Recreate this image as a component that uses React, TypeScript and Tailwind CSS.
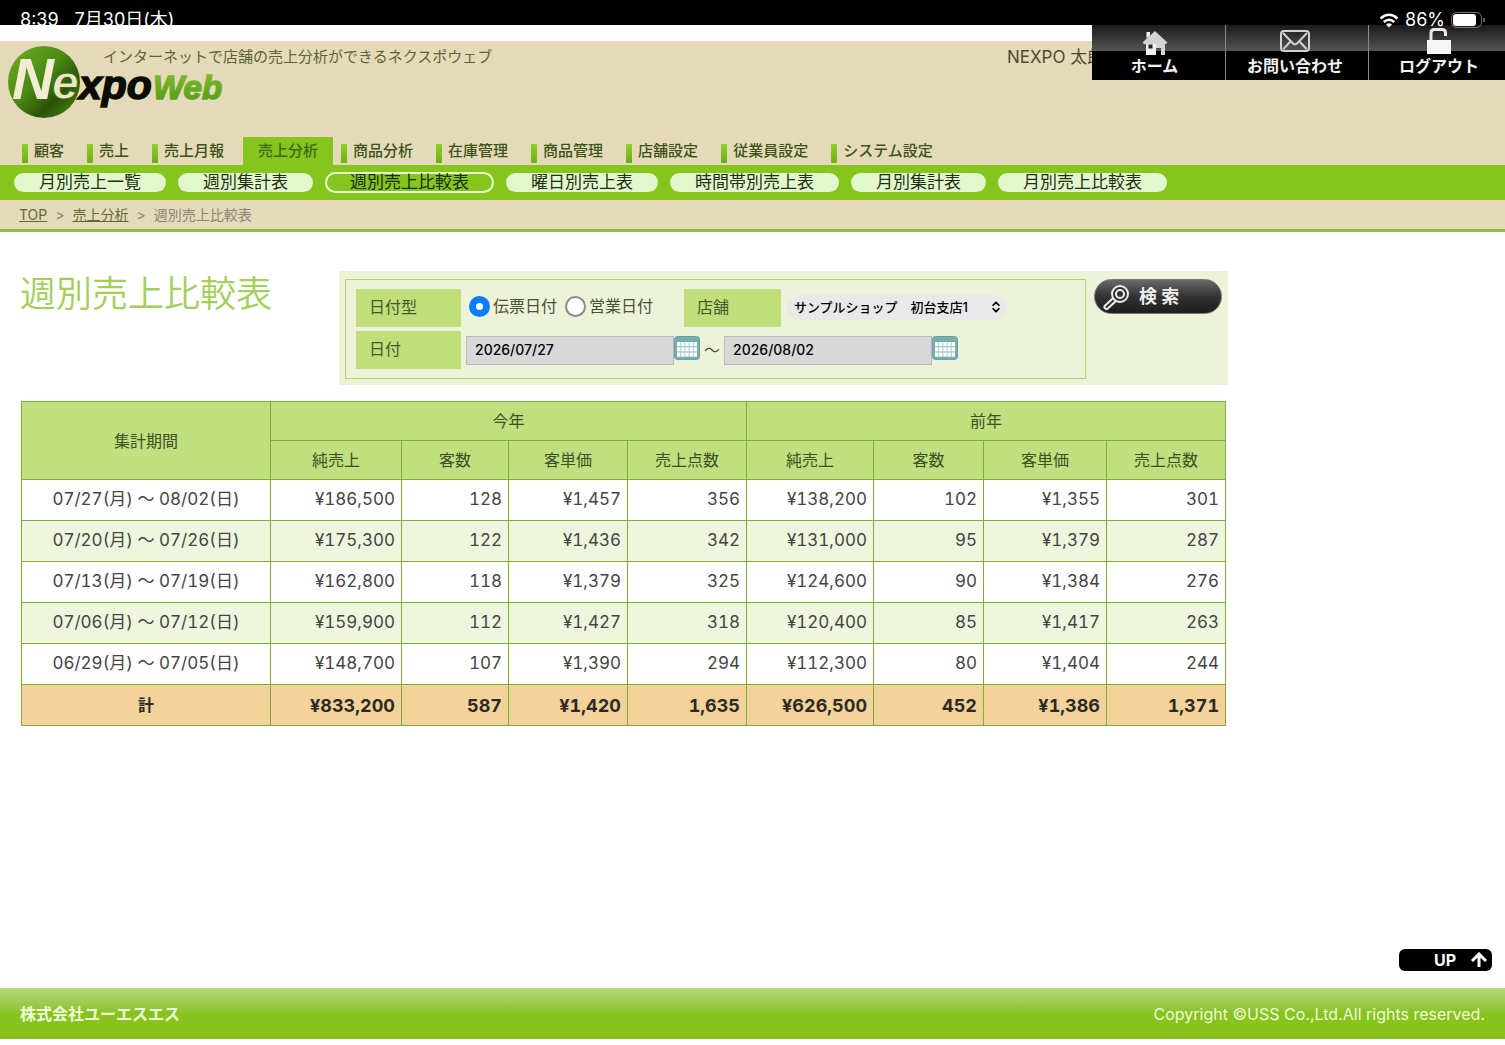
import React, { useState } from "react";
import { LuChevronsUpDown } from "react-icons/lu";

const mainTabs = [
  "顧客",
  "売上",
  "売上月報",
  "売上分析",
  "商品分析",
  "在庫管理",
  "商品管理",
  "店舗設定",
  "従業員設定",
  "システム設定",
];

const subTabs = [
  "月別売上一覧",
  "週別集計表",
  "週別売上比較表",
  "曜日別売上表",
  "時間帯別売上表",
  "月別集計表",
  "月別売上比較表",
];

const columnTitles = ["純売上", "客数", "客単価", "売上点数"];

const rows = [
  ["07/27(月) 〜 08/02(日)", "¥186,500", "128", "¥1,457", "356", "¥138,200", "102", "¥1,355", "301"],
  ["07/20(月) 〜 07/26(日)", "¥175,300", "122", "¥1,436", "342", "¥131,000", "95", "¥1,379", "287"],
  ["07/13(月) 〜 07/19(日)", "¥162,800", "118", "¥1,379", "325", "¥124,600", "90", "¥1,384", "276"],
  ["07/06(月) 〜 07/12(日)", "¥159,900", "112", "¥1,427", "318", "¥120,400", "85", "¥1,417", "263"],
  ["06/29(月) 〜 07/05(日)", "¥148,700", "107", "¥1,390", "294", "¥112,300", "80", "¥1,404", "244"],
];

const totals = ["¥833,200", "587", "¥1,420", "1,635", "¥626,500", "452", "¥1,386", "1,371"];

const Logo = () => (
  <svg width="220" height="76" viewBox="0 0 220 76" role="img" aria-label="NexpoWeb">
    <defs>
      <linearGradient id="ball" x1="0" y1="0" x2="1" y2="1">
        <stop offset="0" stopColor="#6fae22" />
        <stop offset="0.45" stopColor="#4a8a14" />
        <stop offset="0.7" stopColor="#2a5207" />
        <stop offset="1" stopColor="#4f8f18" />
      </linearGradient>
      <linearGradient id="web" x1="0" y1="0" x2="0" y2="1">
        <stop offset="0" stopColor="#86bd30" />
        <stop offset="1" stopColor="#4f9a15" />
      </linearGradient>
    </defs>
    <circle cx="36" cy="37" r="36" fill="url(#ball)" />
    <g fontFamily="'Liberation Sans', Arial, sans-serif" fontWeight="700" fontStyle="italic">
      <text x="71" y="54" fontSize="41" fill="#0b0d05" stroke="#0b0d05" strokeWidth="1.500">xpo</text>
      <text x="4" y="54" fontSize="58" fill="#f1ecd2">N</text>
      <text x="44" y="54" fontSize="48" fill="#ece6c4" stroke="#3c6b12" strokeWidth="1">e</text>
      <text x="145" y="54" fontSize="33" fill="url(#web)" stroke="url(#web)" strokeWidth="1.500">Web</text>
    </g>
  </svg>
);

const HomeIcon = () => (
  <svg width="26" height="26" viewBox="0 0 26 26">
    <path d="M13 1 0.500 12.500l1.500 1.500H4v11h10v-7h5v7h4V14h1l1.500-1.500L21 8.500z" fill="#d4d4d4" />
    <path d="M4.500 2h3.500v3.500L4.500 8.500z" fill="#f2f2f2" />
    <path d="M4 14h10v11H4z" fill="#f0f0f0" />
    <path d="M6.500 14.500h4v4h-4z" fill="#222" />
  </svg>
);

const MailIcon = () => (
  <svg width="30" height="22" viewBox="0 0 30 22" fill="none" stroke="#d2d2d2" strokeWidth="2">
    <rect x="1" y="1" width="28" height="20" rx="3" />
    <path d="M3 3l9.500 10q2.500 2.500 5 0L27 3M3.500 19l6.500-7M26.500 19l-6.500-7" />
  </svg>
);

const UnlockIcon = () => (
  <svg width="26" height="26" viewBox="0 0 26 26">
    <path d="M5 13V5Q5 1.500 8.500 1.500h7.500q3.500 0 3.500 3.500V8" fill="none" stroke="#e9e9e9" strokeWidth="3" />
    <rect x="1" y="12" width="24" height="14" fill="#f6f6f6" />
  </svg>
);

const CalendarIcon = () => (
  <svg width="26" height="24" viewBox="0 0 26 24">
    <rect x="0.500" y="0.500" width="25" height="23" rx="3" fill="#79aeb0" stroke="#6ba1a5" />
    <path d="M3 6h20v15H3z" fill="#a5c9c9" />
    {[0, 1, 2].map((r) =>
      [0, 1, 2, 3, 4].map((c) => (
        <rect key={`${r}-${c}`} x={3 + c * 4.2} y={6 + r * 5.3} width="3.200" height="4" fill="#fff" />
      ))
    )}
  </svg>
);

const SearchIcon = () => (
  <svg width="28" height="28" viewBox="0 0 28 28" fill="none" stroke="#ececec">
    <path d="M11 17l-7.500 7" strokeWidth="6" strokeLinecap="round" />
    <path d="M11 17l-7.500 7" stroke="#333" strokeWidth="2" strokeLinecap="round" />
    <circle cx="17" cy="11" r="8" fill="#333" strokeWidth="2" />
    <circle cx="17" cy="11" r="4" strokeWidth="2" />
  </svg>
);

const StatusBar = () => (
  <div className="relative z-20 flex h-[25px] items-start justify-between bg-black px-5 text-[18px] leading-6 text-white">
    <div className="flex gap-4 pt-2">
      <span>8:39</span>
      <span>7月30日(木)</span>
    </div>
    <div className="flex items-center gap-[6px] pt-2">
      <svg width="20" height="15" viewBox="0 0 20 15" fill="none" stroke="#fff" strokeWidth="2.600">
        <path d="M1.500 5.500Q10-2 18.500 5.500M4.800 9Q10 4.500 15.200 9" />
        <path d="M10 14.500l-3-3q3-2.500 6 0z" fill="#fff" stroke="none" />
      </svg>
      <span>86%</span>
      <svg width="34" height="17" viewBox="0 0 34 17">
        <rect x="0.500" y="0.500" width="30" height="15" rx="5" fill="none" stroke="#777" />
        <rect x="2" y="2" width="23" height="12" rx="3" fill="#fff" />
        <path d="M33 6v4" stroke="#777" strokeWidth="1.500" />
      </svg>
    </div>
  </div>
);

const GlobalNav = () => {
  const cell =
    "flex flex-col items-center justify-end border-l border-[#8a8a8a] first:border-l-0 pb-1 text-[16px] leading-5 font-bold text-[#f2f2f2]";
  return (
    <nav className="absolute top-0 right-0 z-10 flex h-[55px] bg-[linear-gradient(#1a1a1a_0%,#555_47%,#000_48%,#000_100%)]">
      <a href="#home" className={`${cell} w-[133px] pr-2`}>
        <HomeIcon />
        ホーム
      </a>
      <a href="#contact" className={`${cell} w-[143px] pr-1`}>
        <MailIcon />
        <span className="pt-1">お問い合わせ</span>
      </a>
      <a href="#logout" className={`${cell} w-[137px] pl-1`}>
        <UnlockIcon />
        <span className="pt-[2px]">ログアウト</span>
      </a>
    </nav>
  );
};

const Header = () => (
  <header className="relative pt-4">
    <GlobalNav />
    <div className="bg-[#e4dab8] bg-[repeating-linear-gradient(90deg,#e5dbba_0px,#e5dbba_4px,#e4dab8_5px,#e4dab8_9px)]">
      <div className="flex h-24 items-start pt-1 pl-2">
        <Logo />
        <p className="-ml-[125px] text-[15px] leading-6 text-[#5a6434]">
          インターネットで店舗の売上分析ができるネクスポウェブ
        </p>
        <p className="mr-[397px] ml-auto w-[101px] text-[17px] leading-6 whitespace-nowrap text-[#4a4a35]">NEXPO 太郎</p>
      </div>
      <nav className="flex h-7 items-end gap-[23px] pl-[22px]">
        {mainTabs.map((tab) =>
          tab === "売上分析" ? (
            <a
              key={tab}
              href="#tab"
              className="-mr-[15px] -ml-1 h-7 bg-[#86c41e] px-[15px] text-[15px] leading-7 font-medium text-[#3f6a10]"
            >
              {tab}
            </a>
          ) : (
            <a key={tab} href="#tab" className="flex h-7 gap-[6px] text-[15px] leading-7 font-medium text-[#3d5218]">
              <span className="mt-[7px] h-[19px] w-[6px] bg-linear-to-b from-[#8ed02a] to-[#6fae10]" />
              {tab}
            </a>
          )
        )}
      </nav>
      <nav className="flex h-[35px] items-center gap-3 bg-[#86c41e] pl-[14px]">
        {subTabs.map((tab) => (
          <a
            key={tab}
            href="#sub"
            className={
              tab === "週別売上比較表"
                ? "flex h-[21px] items-center rounded-full border-2 border-[#eaffd0] px-[23px] text-[17px] text-[#16300a]"
                : "flex h-[19px] items-center rounded-full bg-[#e2f8cc] px-[25px] text-[17px] text-[#1f3012]"
            }
          >
            {tab}
          </a>
        ))}
      </nav>
      <nav className="flex h-8 items-center gap-2 border-b-3 border-[#8fc044] pl-[19px] text-[14px] text-[#8b8378]">
        <a href="#top" className="text-[#5f6b35] underline">
          TOP
        </a>
        <span>&gt;</span>
        <a href="#analysis" className="text-[#5f6b35] underline">
          売上分析
        </a>
        <span>&gt;</span>
        <span>週別売上比較表</span>
      </nav>
    </div>
  </header>
);

const DateField = ({ label, value }: { label: string; value: string }) => (
  <div className="flex items-start">
    <input
      type="text"
      aria-label={label}
      defaultValue={value}
      className="h-[29px] w-[208px] border border-[#b9b9bb] bg-[#d8d8d9] px-2 pb-[2px] text-[14px] font-medium text-black"
    />
    <button type="button" aria-label={`${label}を選択`}>
      <CalendarIcon />
    </button>
  </div>
);

const SearchForm = () => {
  const [dateType, setDateType] = useState("slip");
  const title = "flex h-[38px] items-center bg-[#c0df7b] pl-[13px] pb-[2px] text-[16px] text-[#46582a]";
  const radio =
    "h-[21px] w-[21px] appearance-none rounded-full border-2 border-[#8c8c8c] bg-white checked:border-[7px] checked:border-[#0a7cff]";

  return (
    <form
      onSubmit={(e) => e.preventDefault()}
      className="flex w-[889px] items-start gap-2 bg-[#edf3d9] pt-2 pr-[6px] pb-[6px] pl-[6px]"
    >
      <div className="flex flex-1 flex-col gap-1 border border-[#b4d468] py-[9px] pl-[10px]">
        <div className="flex items-center">
          <div className={`${title} w-[105px]`}>日付型</div>
          <div className="ml-2 flex w-[215px] items-center gap-2 pb-1 text-[16px] text-[#46503a]">
            <label className="flex items-center gap-[3px]">
              <input
                type="radio"
                name="dateType"
                className={radio}
                checked={dateType === "slip"}
                onChange={() => setDateType("slip")}
              />
              伝票日付
            </label>
            <label className="flex items-center gap-[3px]">
              <input
                type="radio"
                name="dateType"
                className={radio}
                checked={dateType === "business"}
                onChange={() => setDateType("business")}
              />
              営業日付
            </label>
          </div>
          <label htmlFor="shop" className={`${title} w-[97px]`}>
            店舗
          </label>
          <div className="relative ml-[6px] pb-[2px]">
            <select
              id="shop"
              className="h-[25px] w-[220px] appearance-none rounded-full bg-[#e9e9ea] pl-[7px] text-[13px] font-medium text-black"
            >
              <option>サンプルショップ　初台支店1</option>
            </select>
            <LuChevronsUpDown size={14} strokeWidth={3} className="pointer-events-none absolute top-[6px] right-1" />
          </div>
        </div>
        <div className="flex items-center">
          <div className={`${title} w-[105px]`}>日付</div>
          <div className="ml-[5px] flex items-center gap-1 text-[16px] text-[#46503a]">
            <DateField label="開始日" value="2026/07/27" />
            <span>〜</span>
            <DateField label="終了日" value="2026/08/02" />
          </div>
        </div>
      </div>
      <button
        type="submit"
        className="flex h-[35px] w-32 items-center gap-2 rounded-full border border-[#777] bg-linear-to-b from-[#6a6a6a] via-[#333] to-[#1c1c1c] pl-2 text-[18px] font-bold text-[#f0f0f0]"
      >
        <SearchIcon />
        <span>検 索</span>
      </button>
    </form>
  );
};

const SalesTable = () => {
  const line = "border border-[#7fae35]";
  const head = `${line} h-[39px] bg-[#c0df7f] text-[16px] font-normal text-[#3f4f22]`;

  return (
    <table className="w-full table-fixed border-collapse text-[#444] tabular-nums">
      <colgroup>
        <col className="w-[249px]" />
        <col className="w-[131px]" />
        <col className="w-[107px]" />
        <col className="w-[119px]" />
        <col className="w-[119px]" />
        <col className="w-[127px]" />
        <col className="w-[110px]" />
        <col className="w-[123px]" />
        <col className="w-[119px]" />
      </colgroup>
      <thead>
        <tr>
          <th rowSpan={2} className={head}>
            集計期間
          </th>
          <th colSpan={4} className={head}>
            今年
          </th>
          <th colSpan={4} className={head}>
            前年
          </th>
        </tr>
        <tr>
          {[...columnTitles, ...columnTitles].map((title, index) => (
            <th key={index} className={head}>
              {title}
            </th>
          ))}
        </tr>
      </thead>
      <tbody>
        {rows.map((row) => (
          <tr key={row[0]} className="bg-white even:bg-[#eef7de]">
            {row.map((value, index) => (
              <td
                key={index}
                className={`${line} h-[41px] text-[17px] ${index === 0 ? "text-center" : "pr-[6px] text-right"}`}
              >
                {value}
              </td>
            ))}
          </tr>
        ))}
      </tbody>
      <tfoot>
        <tr className="bg-[#f3d29c] font-bold text-[#2d2a22]">
          <th className={`${line} h-[41px] text-[16px]`}>計</th>
          {totals.map((value, index) => (
            <td key={index} className={`${line} pr-[6px] text-right text-[18px]`}>
              {value}
            </td>
          ))}
        </tr>
      </tfoot>
    </table>
  );
};

export default function App() {
  return (
    <div className="flex min-h-screen flex-col bg-white pb-[6px] font-[Inter,'Noto_Sans_CJK_JP',sans-serif]">
      <StatusBar />
      <Header />
      <main className="flex flex-1 flex-col pt-[39px] pl-5">
        <div className="w-full max-w-[1208px]">
          <div className="flex items-start justify-between">
            <h1 className="text-[36px] leading-[46px] font-[350] text-[#a3cf5a]">週別売上比較表</h1>
            <SearchForm />
          </div>
          <div className="max-w-[1206px] pt-4 pl-px">
            <SalesTable />
          </div>
        </div>
        <a
          href="#top"
          className="mt-auto mr-[13px] mb-[17px] flex h-[22px] w-[93px] items-center justify-end gap-[14px] self-end rounded-md bg-black pr-1 text-[16px] font-bold text-white"
        >
          UP
          <svg width="18" height="16" viewBox="0 0 18 16" fill="none" stroke="#fff" strokeWidth="3">
            <path d="M9 15V2M2 9l7-7 7 7" />
          </svg>
        </a>
      </main>
      <footer className="flex h-[51px] items-center justify-between bg-linear-to-b from-[#b6d97c] via-[#88c21f] to-[#86c41a] px-5 text-[16px] text-[#effbd9]">
        <span className="font-bold">株式会社ユーエスエス</span>
        <span>Copyright ©USS Co.,Ltd.All rights reserved.</span>
      </footer>
    </div>
  );
}
